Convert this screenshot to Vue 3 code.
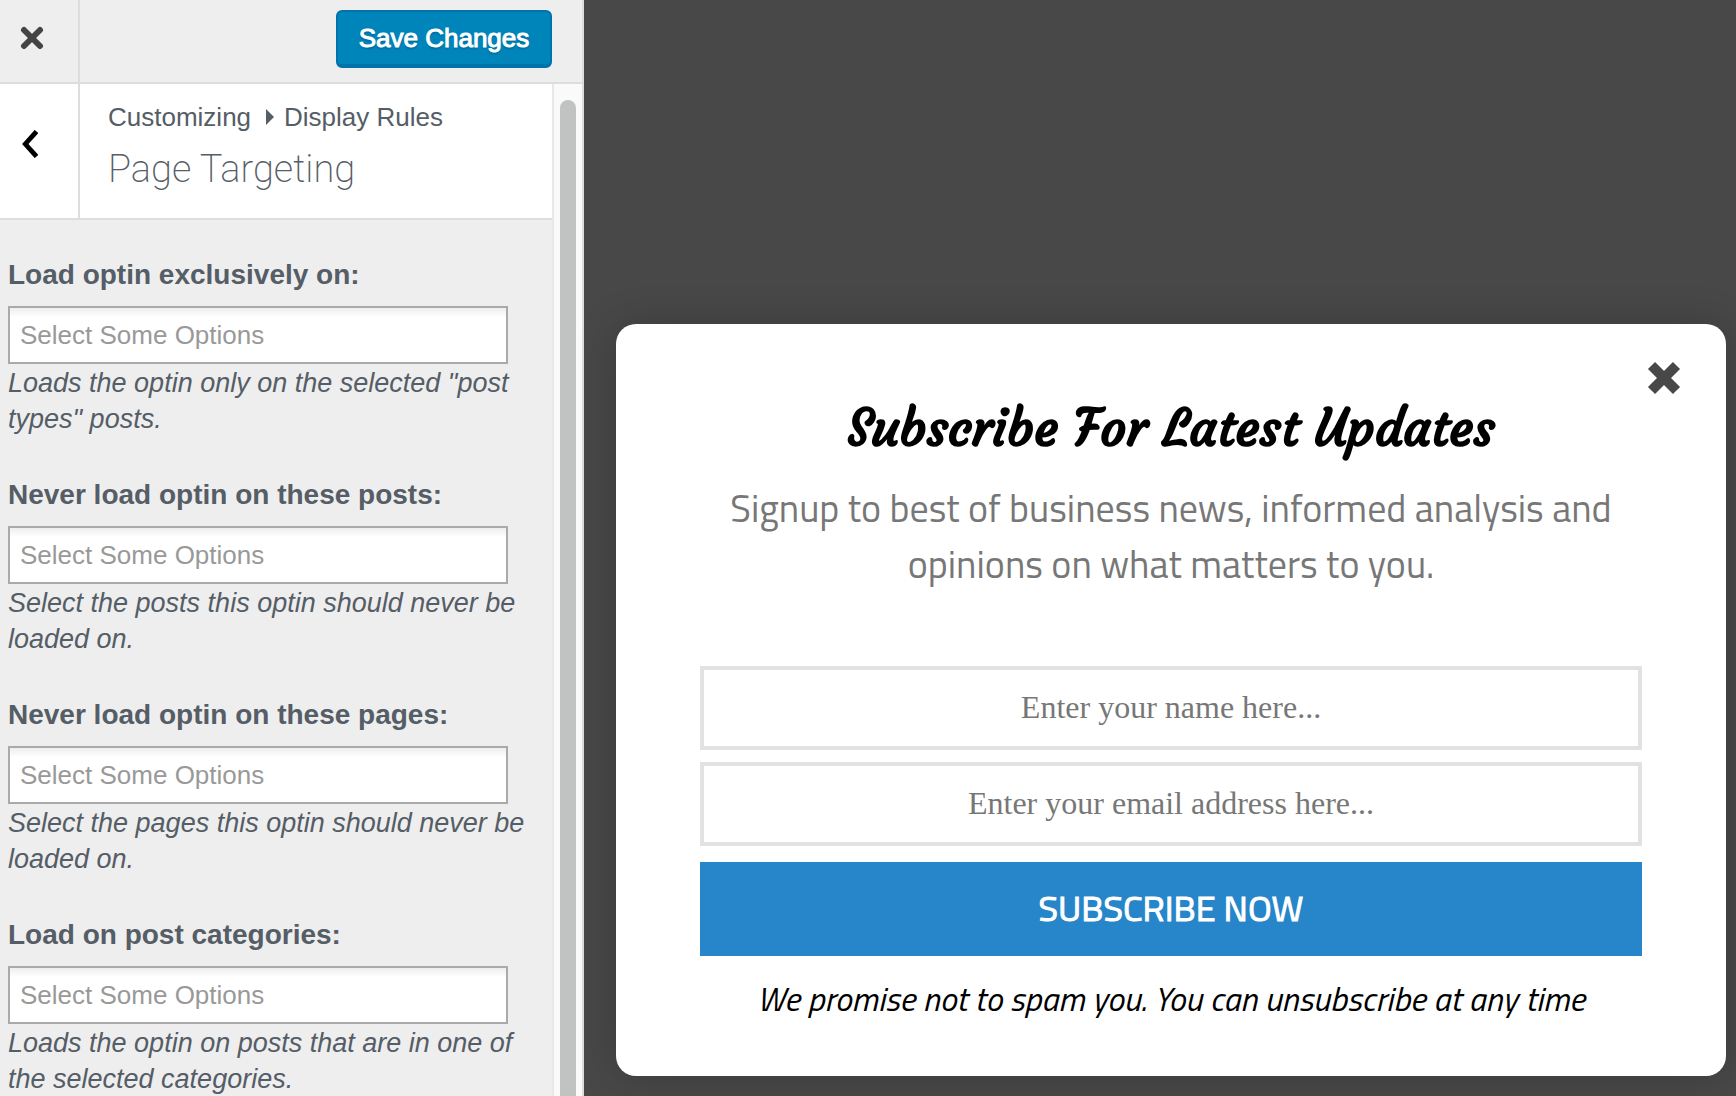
<script setup>
const controls = [
  {
    id: 'exclusive-types',
    label: 'Load optin exclusively on:',
    help: 'Loads the optin only on the selected "post types" posts.',
  },
  {
    id: 'excluded-posts',
    label: 'Never load optin on these posts:',
    help: 'Select the posts this optin should never be loaded on.',
  },
  {
    id: 'excluded-pages',
    label: 'Never load optin on these pages:',
    help: 'Select the pages this optin should never be loaded on.',
  },
  {
    id: 'post-categories',
    label: 'Load on post categories:',
    help: 'Loads the optin on posts that are in one of the selected categories.',
  },
]
</script>

<template>
  <div class="customizer">
    <aside class="sidebar">
      <header class="toolbar">
        <button class="close-panel" type="button" aria-label="Close customizer">
          <svg width="24" height="24" viewBox="0 0 24 24">
            <path d="M4 4L20 20M20 4L4 20" stroke="#444" stroke-width="6" stroke-linecap="round" fill="none" />
          </svg>
        </button>
        <button class="save" type="button">Save Changes</button>
      </header>

      <div class="body">
        <div class="panel">
          <div class="section-head">
            <button class="back" type="button" aria-label="Back">
              <svg width="16" height="28" viewBox="0 0 16 28">
                <path d="M14.500 1.500L3.300 14L14.500 26.500" stroke="#000" stroke-width="4.800" fill="none" />
              </svg>
            </button>
            <div class="titles">
              <p class="crumbs">
                <span>Customizing</span>
                <svg class="arrow" width="8" height="16" viewBox="0 0 8 16"><path d="M0 0L8 8L0 16Z" fill="#555d66" /></svg>
                <span>Display Rules</span>
              </p>
              <h1>Page Targeting</h1>
            </div>
          </div>

          <div v-for="c in controls" :key="c.id" class="control">
            <label :for="c.id">{{ c.label }}</label>
            <input :id="c.id" type="text" placeholder="Select Some Options" />
            <p>{{ c.help }}</p>
          </div>
        </div>
        <div class="track"><div class="thumb"></div></div>
      </div>
    </aside>

    <main class="preview">
      <section class="optin">
        <button class="dismiss" type="button" aria-label="Close">
          <svg width="34" height="34" viewBox="0 0 34 34">
            <path d="M4.500 4.500L29.500 29.500M29.500 4.500L4.500 29.500" stroke="#484848" stroke-width="10" fill="none" />
          </svg>
        </button>
        <h2>Subscribe For Latest Updates</h2>
        <p class="lead">Signup to best of business news, informed analysis and opinions on what matters to you.</p>
        <form @submit.prevent>
          <input type="text" placeholder="Enter your name here..." aria-label="Name" />
          <input type="email" placeholder="Enter your email address here..." aria-label="Email address" />
          <button type="submit">SUBSCRIBE NOW</button>
        </form>
        <p class="note">We promise not to spam you. You can unsubscribe at any time</p>
      </section>
    </main>
  </div>
</template>

<style>
body {
  margin: 0;
  overflow: hidden;
}
</style>

<style scoped>
* {
  box-sizing: border-box;
}
button,
input {
  margin: 0;
  padding: 0;
  border: 0;
  border-radius: 0;
  outline: none;
  background: none;
}
button {
  cursor: pointer;
}
svg {
  display: block;
}
h1,
h2,
p {
  margin: 0;
}
.customizer {
  display: flex;
  height: 100vh;
  overflow: hidden;
  font-family: "Liberation Sans", Arial, sans-serif;
}

.sidebar {
  display: flex;
  flex-direction: column;
  flex: 0 0 584px;
  background: #eee;
  border-right: 2px solid #ddd;
  color: #555d66;
}
.toolbar {
  display: flex;
  justify-content: space-between;
  flex: none;
  height: 84px;
  padding-right: 30px;
  border-bottom: 2px solid #ddd;
}
.close-panel,
.back {
  display: flex;
  flex: none;
  align-items: center;
  width: 80px;
  padding: 0 0 6px 20px;
  border-right: 2px solid #ddd;
}
.back {
  padding-bottom: 14px;
  padding-left: 22px;
}
.save {
  width: 216px;
  height: 58px;
  margin-top: 10px;
  border: 2px solid #0073aa;
  border-bottom-width: 4px;
  border-radius: 6px;
  background: #0085ba;
  color: #fff;
  font: 26px "Liberation Sans", Arial, sans-serif;
  -webkit-text-stroke: 1px #fff;
  text-shadow: 0 2px 2px #006799;
}
.body {
  display: flex;
  flex: 1;
  min-height: 0;
}
.panel {
  flex: 1;
  overflow: hidden;
}
.section-head {
  display: flex;
  height: 136px;
  margin-bottom: 34px;
  background: #fff;
  border-bottom: 2px solid #ddd;
}
.titles {
  padding: 16px 0 0 28px;
}
.crumbs {
  display: flex;
  align-items: center;
  gap: 10px;
  font-size: 26px;
  line-height: 34px;
}
.arrow {
  margin-left: 5px;
}
h1 {
  font: 200 38px/70px Roboto, "Helvetica Neue", sans-serif;
}
.control {
  padding: 0 44px 0 8px;
  margin-bottom: 36px;
}
.control label {
  display: block;
  margin-bottom: 10px;
  font-size: 28px;
  font-weight: bold;
  line-height: 42px;
}
.control input {
  display: block;
  width: 100%;
  height: 58px;
  padding: 0 10px;
  border: 2px solid #aaa;
  background: #fff linear-gradient(#eee, #fff) no-repeat 0 0 / 100% 9px;
  font: 26px "Liberation Sans", Arial, sans-serif;
}
.control input::placeholder {
  color: #999;
  opacity: 1;
}
.control p {
  margin: 1px -20px 0 0;
  padding-bottom: 1px;
  font-size: 27px;
  font-style: italic;
  line-height: 36px;
}
.track {
  flex: none;
  width: 30px;
  padding: 16px 6px 0;
  border-left: 2px solid #e8e8e8;
  background: #fafafa;
}
.thumb {
  height: 100%;
  border-radius: 8px 8px 0 0;
  background: #c1c3c2;
}

.preview {
  display: flex;
  align-items: flex-end;
  flex: 1;
  padding: 0 10px 20px 32px;
  background: #484848;
}
.optin {
  position: relative;
  flex: 1;
  padding: 68px 84px 54px;
  border-radius: 20px;
  background: #fff;
  box-shadow: 0 0 40px rgba(0, 0, 0, 0.2);
  text-align: center;
  font-family: "Titillium Web", Roboto, sans-serif;
}
.dismiss {
  position: absolute;
  top: 37px;
  right: 45px;
}
h2 {
  color: #000;
  font: bold 51px/72px Courgette, cursive;
}
.lead {
  margin: 16px 0 74px;
  color: #777;
  font-size: 38px;
  line-height: 56px;
}
form {
  display: flex;
  flex-direction: column;
}
form input {
  height: 84px;
  padding-bottom: 2px;
  margin-bottom: 12px;
  border: 4px solid #e2e2e2;
  text-align: center;
  font: 32px "Liberation Serif", "Times New Roman", serif;
}
form input::placeholder {
  color: #777;
  opacity: 1;
}
form button {
  height: 94px;
  padding-bottom: 4px;
  margin-top: 4px;
  background: #2785c9;
  color: #fff;
  font: 36px "Titillium Web", Roboto, sans-serif;
  -webkit-text-stroke: 1px #fff;
}
.note {
  margin-top: 18px;
  color: #000;
  font-size: 34px;
  font-style: italic;
  line-height: 48px;
}
</style>
